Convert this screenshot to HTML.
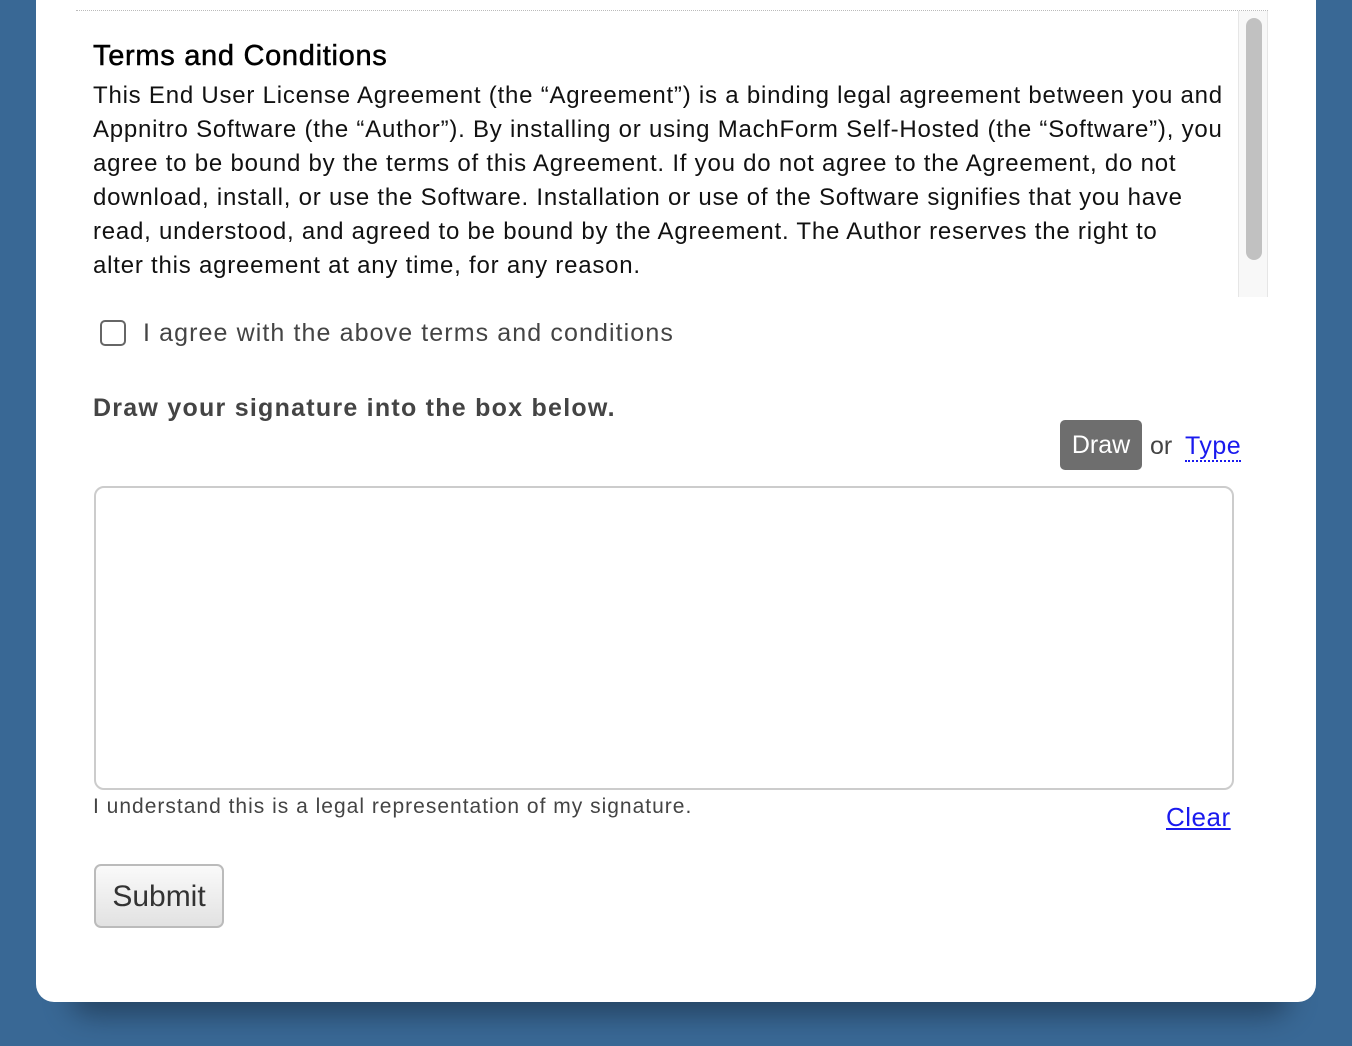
<!DOCTYPE html>
<html><head><meta charset="utf-8"><style>
body{margin:0;width:1352px;height:1046px;background:#396895;position:relative;overflow:hidden;font-family:"Liberation Sans",sans-serif;}
.shadow{position:absolute;left:70px;top:975px;width:1220px;height:40px;border-radius:20px;background:#1f3a55;filter:blur(14px);opacity:.8}
.card{position:absolute;left:36px;top:-20px;width:1280px;height:1022px;background:#fff;border-radius:18px}
.a{position:absolute;white-space:nowrap}
.line{position:absolute;left:93px;font-size:24px;color:#111;letter-spacing:0.78px;white-space:nowrap}
</style></head><body>
<div class="shadow"></div>
<div class="card"></div>
<div class="a" style="left:76px;top:10px;width:1192px;border-top:1px dotted #bbb"></div>
<div class="a" style="left:1238px;top:11px;width:28px;height:286px;background:#f8f8f8;border-left:1px solid #e6e6e6;border-right:1px solid #e6e6e6"></div>
<div class="a" style="left:1246px;top:18px;width:16px;height:242px;background:#c1c1c1;border-radius:8px"></div>
<div class="a" style="left:93px;top:40px;font-size:29px;color:#000;letter-spacing:0.7px;-webkit-text-stroke:0.5px #000">Terms and Conditions</div>
<div class="line" style="top:82px">This End User License Agreement (the “Agreement”) is a binding legal agreement between you and</div>
<div class="line" style="top:116px">Appnitro Software (the “Author”). By installing or using MachForm Self-Hosted (the “Software”), you</div>
<div class="line" style="top:150px">agree to be bound by the terms of this Agreement. If you do not agree to the Agreement, do not</div>
<div class="line" style="top:184px">download, install, or use the Software. Installation or use of the Software signifies that you have</div>
<div class="line" style="top:218px">read, understood, and agreed to be bound by the Agreement. The Author reserves the right to</div>
<div class="line" style="top:252px">alter this agreement at any time, for any reason.</div>
<div class="a" style="left:100px;top:320px;width:26px;height:26px;border:2px solid #666;border-radius:5px;box-sizing:border-box"></div>
<div class="a" style="left:143px;top:319px;font-size:25px;color:#444;letter-spacing:1.1px">I agree with the above terms and conditions</div>
<div class="a" style="left:93px;top:394px;font-size:25px;color:#444;font-weight:bold;letter-spacing:1.25px">Draw your signature into the box below.</div>
<div class="a" style="left:1060px;top:420px;width:82px;height:50px;background:#6e6e6e;border-radius:5px;color:#fff;font-size:25px;line-height:50px;text-align:center">Draw</div>
<div class="a" style="left:1150px;top:432px;font-size:25px;color:#444">or</div>
<div class="a" style="left:1185px;top:432px;font-size:25px;color:#1a1aee;border-bottom:2px dotted #1a1aee;line-height:28px;letter-spacing:0.5px">Type</div>
<div class="a" style="left:94px;top:486px;width:1140px;height:304px;border:2px solid #ccc;border-radius:10px;box-sizing:border-box"></div>
<div class="a" style="left:93px;top:795px;font-size:21px;color:#444;letter-spacing:1px">I understand this is a legal representation of my signature.</div>
<div class="a" style="left:1166px;top:802px;font-size:26px;color:#1a1aee;text-decoration:underline;letter-spacing:0.5px">Clear</div>
<div class="a" style="left:94px;top:864px;width:130px;height:64px;border:2px solid #bbb;border-radius:7px;box-sizing:border-box;background:linear-gradient(#fafafa,#e2e2e2);color:#333;font-size:30px;line-height:62px;text-align:center">Submit</div>
</body></html>
